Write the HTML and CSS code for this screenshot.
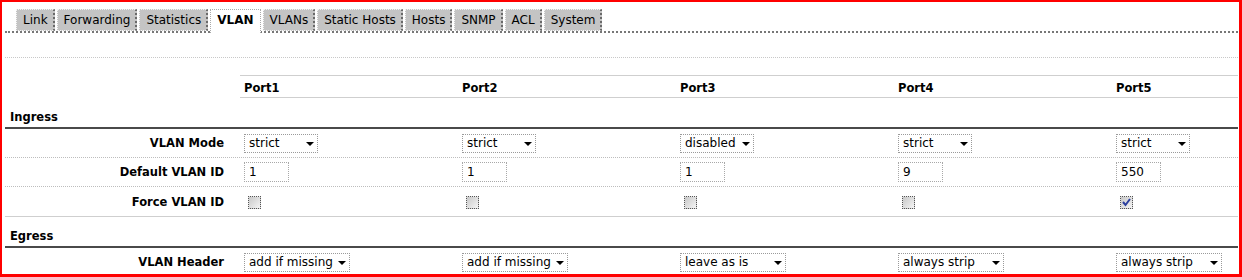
FILE: index.html
```html
<!DOCTYPE html>
<html lang="en">
<head>
    <meta charset="UTF-8">
    <title>VLAN</title>
    <link rel="stylesheet" href="styles.css">
</head>
<body>
<div class="frame">
    <!-- tabs -->
    <div class="tabs">
        <span class="tab">Link</span>
        <span class="tab">Forwarding</span>
        <span class="tab">Statistics</span>
        <span class="tab active">VLAN</span>
        <span class="tab">VLANs</span>
        <span class="tab">Static Hosts</span>
        <span class="tab">Hosts</span>
        <span class="tab">SNMP</span>
        <span class="tab">ACL</span>
        <span class="tab">System</span>
    </div>
    <div class="toolbar"></div>

    <!-- port table -->
    <div class="grid">
        <div class="row head">
            <div class="label"></div>
            <div class="cell">Port1</div>
            <div class="cell">Port2</div>
            <div class="cell">Port3</div>
            <div class="cell">Port4</div>
            <div class="cell">Port5</div>
        </div>

        <div class="row group"><div class="title">Ingress</div></div>

        <div class="row ctl">
            <div class="label">VLAN Mode</div>
            <div class="cell"><span class="sel short"><select><option>strict</option></select></span></div>
            <div class="cell"><span class="sel short"><select><option>strict</option></select></span></div>
            <div class="cell"><span class="sel short"><select><option>disabled</option></select></span></div>
            <div class="cell"><span class="sel short"><select><option>strict</option></select></span></div>
            <div class="cell"><span class="sel short"><select><option>strict</option></select></span></div>
        </div>
        <div class="row ctl">
            <div class="label">Default VLAN ID</div>
            <div class="cell"><input type="text" value="1"></div>
            <div class="cell"><input type="text" value="1"></div>
            <div class="cell"><input type="text" value="1"></div>
            <div class="cell"><input type="text" value="9"></div>
            <div class="cell"><input type="text" value="550"></div>
        </div>
        <div class="row ctl last">
            <div class="label">Force VLAN ID</div>
            <div class="cell"><span class="cb"></span></div>
            <div class="cell"><span class="cb"></span></div>
            <div class="cell"><span class="cb"></span></div>
            <div class="cell"><span class="cb"></span></div>
            <div class="cell"><span class="cb"><svg width="11" height="11" viewBox="0 0 11 11"><path d="M2 5 L4.5 8 L9 2" fill="none" stroke="#2b3f9e" stroke-width="2"/></svg></span></div>
        </div>

        <div class="row group"><div class="title">Egress</div></div>

        <div class="row ctl">
            <div class="label">VLAN Header</div>
            <div class="cell"><span class="sel long"><select><option>add if missing</option></select></span></div>
            <div class="cell"><span class="sel long"><select><option>add if missing</option></select></span></div>
            <div class="cell"><span class="sel long"><select><option>leave as is</option></select></span></div>
            <div class="cell"><span class="sel long"><select><option>always strip</option></select></span></div>
            <div class="cell"><span class="sel long"><select><option>always strip</option></select></span></div>
        </div>
    </div>
</div>
</body>
</html>
```

FILE: styles.css
```css
body {
    margin: 0;
    font-family: 'DejaVu Sans', Verdana, sans-serif;
    font-size: 12px;
    color: #000;
    background: #fff;
}

.frame {
    box-sizing: border-box;
    width: 1242px;
    height: 277px;
    border: 2px solid #ff0000;
    border-right-width: 3px;
    border-bottom-width: 3px;
    padding: 0 1px 0 3px;
    overflow: hidden;
}

/* tabs */
.tabs {
    display: flex;
    align-items: flex-end;
    gap: 2px;
    padding: 7px 0 0 11px;
    border-bottom: 2px dotted #777;
    height: 22px;
    box-sizing: content-box;
}

.tab {
    height: 20px;
    line-height: 21px;
    padding: 0 5px 0 6px;
    background: #c4c4c4;
    border: 1px dotted #f4f4f4;
    border-right: 2px dotted #6a6a6a;
}

.tab.active {
    height: 23px;
    margin-bottom: -2px;
    background: #fff;
    font-weight: bold;
    border: 1px dotted #aaa;
    border-bottom: none;
    border-right: 1px dotted #aaa;
    padding: 0 6px;
}

.toolbar {
    height: 24px;
    border-bottom: 1px dotted #c8c8c8;
}

/* table */
.grid {
    margin-top: 17px;
}

.row {
    display: grid;
    grid-template-columns: 235px 218px 218px 218px 218px 1fr;
    align-items: center;
}

.label {
    text-align: right;
    padding-right: 16px;
    font-weight: bold;
    font-size: 11.5px;
}

.cell {
    padding-left: 4px;
}

.head .cell {
    box-sizing: border-box;
    height: 23px;
    padding-top: 3px;
    line-height: 18px;
    font-weight: bold;
    font-size: 11.5px;
    border-top: 1px solid #cfcfcf;
    border-bottom: 1px solid #cfcfcf;
}

.group {
    height: 29px;
    display: flex;
    align-items: flex-end;
    border-bottom: 2px solid #4a4a4a;
}

.group .title {
    font-weight: bold;
    font-size: 11.5px;
    padding: 0 0 3px 5px;
}

.ctl {
    height: 28px;
    border-bottom: 1px dotted #bdbdbd;
}

.ctl.last {
    height: 29px;
    border-bottom: 1px solid #cfcfcf;
}

/* controls */
.sel {
    position: relative;
    display: inline-block;
}

.sel select {
    appearance: none;
    box-sizing: border-box;
    height: 19px;
    border: 1px dotted #9a9a9a;
    border-radius: 0;
    background: #fff;
    font-family: inherit;
    font-size: 12px;
    color: #000;
    padding: 0 0 0 4px;
    margin: 0;
}

.sel.short select { width: 74px; }
.sel.long select { width: 106px; }

.sel::after {
    content: '';
    position: absolute;
    right: 4px;
    top: 8px;
    border-left: 4px solid transparent;
    border-right: 4px solid transparent;
    border-top: 4px solid #000;
}

input[type="text"] {
    box-sizing: border-box;
    width: 45px;
    height: 20px;
    border: 1px dotted #a8a8a8;
    font-family: inherit;
    font-size: 12px;
    color: #000;
    padding: 0 0 0 4px;
    margin: 0;
    vertical-align: middle;
}

.cb {
    display: inline-flex;
    align-items: center;
    justify-content: center;
    box-sizing: border-box;
    width: 13px;
    height: 13px;
    margin-left: 4px;
    border: 1px dotted #555;
    background: linear-gradient(135deg, #c8c8c8, #f4f4f4);
    vertical-align: middle;
}
```
